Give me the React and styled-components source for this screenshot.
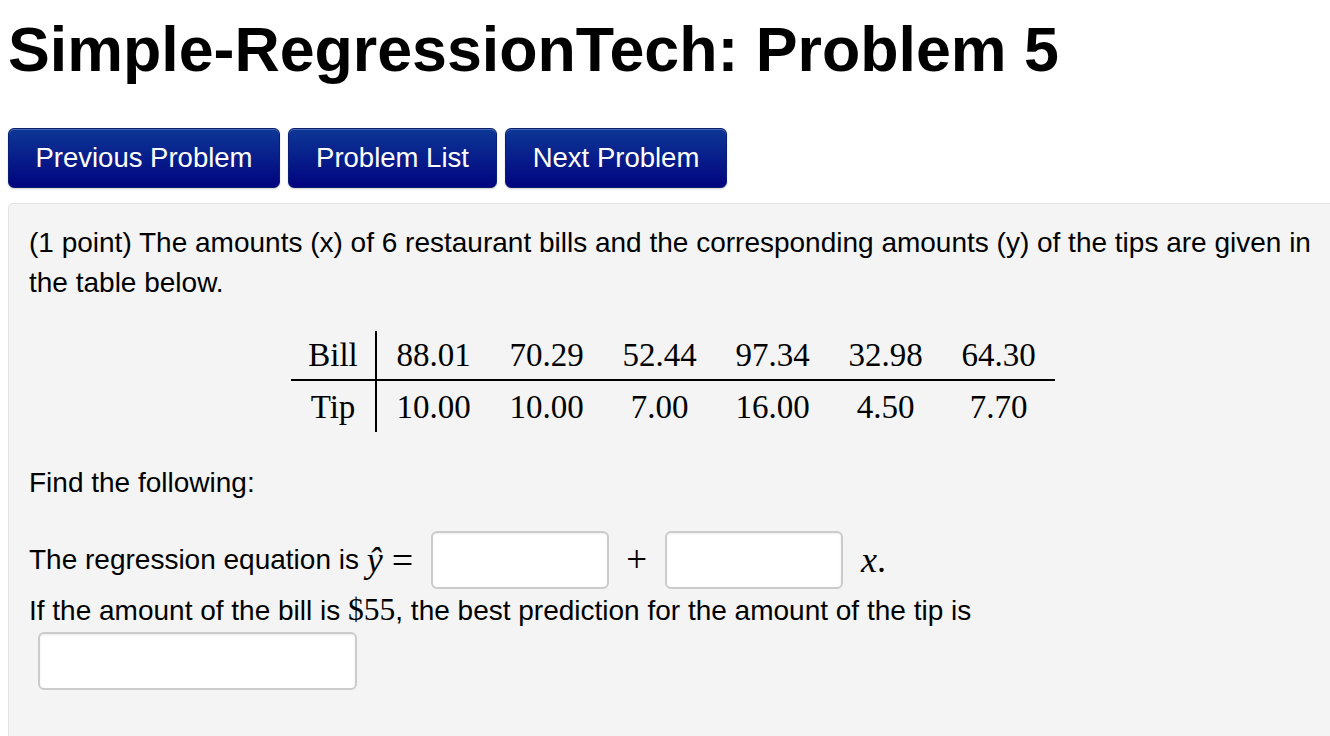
import React from "react";
import styled, { createGlobalStyle } from "styled-components";

const Global = createGlobalStyle`
  html, body { margin: 0; padding: 0; background: #fff; overflow: hidden; }
  body { font-family: "Liberation Sans", Arial, sans-serif; color: #000; }
`;

const Page = styled.div`
  padding: 0 0 0 8px;
  width: 1338px;
`;

const Title = styled.h1`
  margin: 0;
  padding-top: 13px;
  font-size: 62.7px;
  font-weight: bold;
  line-height: 72px;
`;

const NavBar = styled.div`
  display: flex;
  gap: 8px;
  margin-top: 43px;
`;

const NavButton = styled.button`
  height: 60px;
  width: ${p => p.$w}px;
  padding: 0;
  border: 1px solid #0a1f73;
  border-radius: 6px;
  background: linear-gradient(#0d3796, #01047f);
  box-shadow: inset 0 1px 0 rgba(255,255,255,0.25), 0 1px 2px rgba(0,0,0,0.2);
  color: #fff;
  font-family: "Liberation Sans", Arial, sans-serif;
  font-size: 27.5px;
  cursor: pointer;
`;

const Panel = styled.div`
  margin-top: 15px;
  width: 1330px;
  min-height: 560px;
  box-sizing: border-box;
  padding: 19px 20px 40px;
  background: #f4f4f4;
  border: 1px solid #e3e3e3;
  border-radius: 5px;
  font-size: 28px;
  line-height: 40px;
`;

const Para = styled.p`
  margin: 0;
`;

const Table = styled.table`
  margin: 28px auto 0;
  border-collapse: collapse;
  font-family: "Liberation Serif", "Times New Roman", serif;
  font-size: 33px;
`;

const Cell = styled.td`
  width: ${p => (p.$head ? "84px" : "113px")};
  padding: 0;
  height: ${p => (p.$top ? "48px" : "51px")};
  text-align: center;
  vertical-align: middle;
  line-height: 40px;
  border-right: ${p => (p.$head ? "2px solid #000" : "none")};
  border-bottom: ${p => (p.$top ? "2px solid #000" : "none")};
`;

const Section = styled.div`
  margin-top: ${p => p.$mt || 0}px;
`;

const EqLine = styled.div`
  display: flex;
  align-items: center;
  height: 60px;
`;

const MathText = styled.span`
  font-family: "Liberation Serif", "Times New Roman", serif;
  font-size: ${p => p.$size || 31}px;
  font-style: ${p => (p.$italic ? "italic" : "normal")};
  margin: ${p => p.$m || "0"};
`;

const Input = styled.input`
  width: ${p => p.$w}px;
  height: 58px;
  box-sizing: border-box;
  border: 2px solid #cbcbcb;
  border-radius: 6px;
  background: #fff;
  box-shadow: inset 0 1px 2px rgba(0,0,0,0.08);
  margin: ${p => p.$m || "0"};
`;

const bills = ["88.01", "70.29", "52.44", "97.34", "32.98", "64.30"];
const tips = ["10.00", "10.00", "7.00", "16.00", "4.50", "7.70"];

export default function App() {
  return (
    <>
      <Global />
      <Page>
        <Title>Simple-RegressionTech: Problem 5</Title>
        <NavBar>
          <NavButton $w={272}>Previous Problem</NavButton>
          <NavButton $w={209}>Problem List</NavButton>
          <NavButton $w={222}>Next Problem</NavButton>
        </NavBar>
        <Panel>
          <Para>
            (1 point) The amounts (x) of 6 restaurant bills and the corresponding amounts (y) of the tips are given in the table below.
          </Para>
          <Table>
            <tbody>
              <tr>
                <Cell $head $top>Bill</Cell>
                {bills.map((b, i) => (
                  <Cell key={i} $top>{b}</Cell>
                ))}
              </tr>
              <tr>
                <Cell $head>Tip</Cell>
                {tips.map((t, i) => (
                  <Cell key={i}>{t}</Cell>
                ))}
              </tr>
            </tbody>
          </Table>
          <Section $mt={31}>
            <Para>Find the following:</Para>
          </Section>
          <Section $mt={27}>
            <EqLine>
              The regression equation is&nbsp;
              <MathText $italic $size={36} $m="0 9px 0 0">ŷ</MathText>
              <MathText $size={38}>=</MathText>
              <Input $w={178} $m="0 0 0 18px" />
              <MathText $size={37} $m="0 18px 0 17px">+</MathText>
              <Input $w={178} />
              <MathText $italic $size={36} $m="0 0 0 18px">x</MathText>
              <MathText $size={36}>.</MathText>
            </EqLine>
            <Para>
              If the amount of the bill is <MathText $size={31.5}>$55</MathText>, the best prediction for the amount of the tip is
            </Para>
            <Input $w={319} $m="1px 0 0 9px" />
          </Section>
        </Panel>
      </Page>
    </>
  );
}
